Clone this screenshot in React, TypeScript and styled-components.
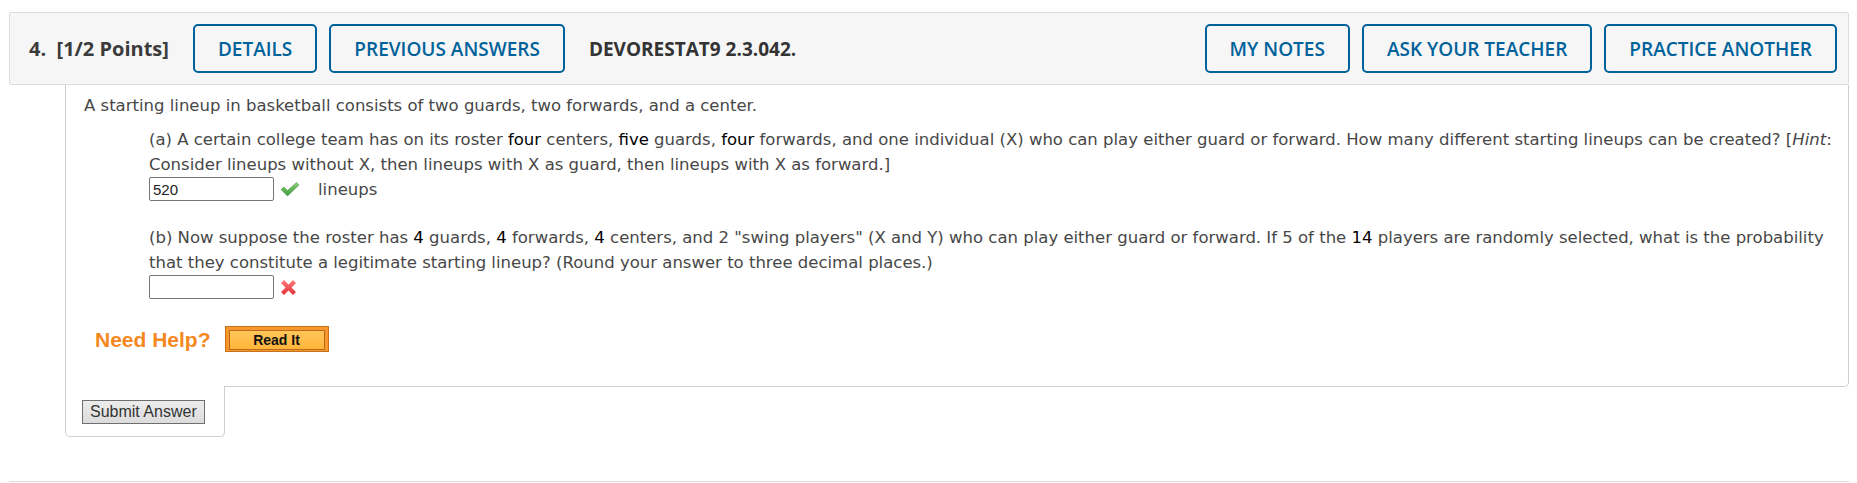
import React from "react";
import styled, { createGlobalStyle } from "styled-components";

//-----------------------STYLE-----------------------//

const GlobalStyle = createGlobalStyle`
  html, body {
    margin: 0;
    padding: 0;
    background: #fff;
  }
  body {
    font-family: "DejaVu Sans", Verdana, sans-serif;
  }
`;

const PageStyle = styled.div`
  padding: 12px 8px 0 9px;
`;

const QuestionStyle = styled.div`
  display: flex;
  flex-direction: column;
`;

const HeaderStyle = styled.div`
  display: flex;
  justify-content: space-between;
  align-items: center;
  height: 71px;
  padding: 0 11px 0 19px;
  background: #f6f6f6;
  border: 1px solid #dcdcdc;
  border-radius: 2px;
  font-family: "Open Sans", sans-serif;
`;

const HeaderGroup = styled.div`
  display: flex;
  align-items: center;
  gap: 12px;
`;

const QuestionNumber = styled.span`
  font-size: 20px;
  font-weight: 700;
  color: #3b3b3b;
  margin-right: 12px;
  white-space: pre;
`;

const QuestionCode = styled.span`
  font-size: 19px;
  font-weight: 700;
  color: #333;
  margin-left: 12px;
`;

const OutlineButton = styled.button`
  height: 49px;
  padding: 0 23px;
  border: 2px solid #00629b;
  border-radius: 5px;
  background: #f6f6f6;
  color: #00629b;
  font-family: "Open Sans", sans-serif;
  font-size: 19px;
  font-weight: 600;
  cursor: pointer;
`;

const BodyStyle = styled.div`
  margin-left: 56px;
  padding: 8px 6px 34px 18px;
  border: 1px solid #cfcfcf;
  border-top: none;
  border-radius: 0 0 5px 0;
  color: #474747;
  font-size: 16.5px;
  line-height: 25px;
`;

const Intro = styled.div``;

const PartStyle = styled.div<{ $top: number }>`
  margin: ${(p) => p.$top}px 0 0 65px;
  b {
    font-weight: normal;
    color: #000;
  }
`;

const AnswerRow = styled.div`
  display: flex;
  align-items: center;
  height: 24px;
  gap: 6px;
`;

const AnswerInput = styled.input`
  box-sizing: border-box;
  width: 125px;
  height: 24px;
  padding: 1px 3px;
  border: 1px solid #777;
  border-radius: 2px;
  font-family: "Liberation Sans", Arial, sans-serif;
  font-size: 15px;
  color: #222;
`;

const Unit = styled.span`
  margin-left: 12px;
`;

const HelpRow = styled.div`
  display: flex;
  align-items: center;
  gap: 14px;
  margin: 27px 0 0 11px;
`;

const NeedHelp = styled.span`
  font-family: "Liberation Sans", Arial, sans-serif;
  font-size: 21px;
  font-weight: 700;
  color: #f5891f;
`;

const ReadItButton = styled.button`
  box-sizing: border-box;
  width: 104px;
  height: 26px;
  padding: 3px;
  border: 1px solid #c4731c;
  background: #f7962a;
  cursor: pointer;
  span {
    display: flex;
    align-items: center;
    justify-content: center;
    height: 100%;
    border: 1px solid #b8691a;
    background: linear-gradient(#ffc65a, #ffb43a);
    font-family: "Liberation Sans", Arial, sans-serif;
    font-size: 14px;
    font-weight: 700;
    color: #111;
  }
`;

const SubmitTab = styled.div`
  align-self: flex-start;
  margin: -1px 0 0 56px;
  width: 142px;
  padding: 14px 0 12px 16px;
  background: #fff;
  border: 1px solid #cfcfcf;
  border-top: none;
  border-radius: 0 0 5px 5px;
`;

const SubmitButton = styled.button`
  display: block;
  box-sizing: border-box;
  height: 24px;
  padding: 0 7px;
  border: 1px solid #6f6f6f;
  background: linear-gradient(#ececec, #dcdcdc);
  font-family: "Liberation Sans", Arial, sans-serif;
  font-size: 16px;
  color: #333;
  cursor: pointer;
`;

const FooterLine = styled.div`
  margin-top: 44px;
  border-top: 1px solid #e0e0e0;
`;

//-----------------------ICONS-----------------------//

const CheckMark = () => (
  <svg width="20" height="16" viewBox="0 0 20 16">
    <defs>
      <linearGradient id="chk" x1="0" y1="0" x2="0" y2="1">
        <stop offset="0" stopColor="#8fd07d" />
        <stop offset="1" stopColor="#3f9a3a" />
      </linearGradient>
    </defs>
    <path
      d="M1 8.5 L4 6 L7.5 9.5 L16.5 1.5 L19 4 L7.5 15 Z"
      fill="url(#chk)"
      stroke="#4a9b43"
      strokeWidth="0.6"
    />
  </svg>
);

const CrossMark = () => (
  <svg width="17" height="17" viewBox="0 0 17 17">
    <defs>
      <linearGradient id="crs" x1="0" y1="0" x2="0" y2="1">
        <stop offset="0" stopColor="#ff7a7a" />
        <stop offset="1" stopColor="#e2333a" />
      </linearGradient>
    </defs>
    <path
      d="M1 4 L4 1 L8.5 5.5 L13 1 L16 4 L11.5 8.5 L16 13 L13 16 L8.5 11.5 L4 16 L1 13 L5.5 8.5 Z"
      fill="url(#crs)"
    />
  </svg>
);

//-----------------------COMPONENT-----------------------//

const App = () => {
  return (
    <PageStyle>
      <GlobalStyle />
      <QuestionStyle>
        <HeaderStyle>
          <HeaderGroup>
            <QuestionNumber>4.  [1/2 Points]</QuestionNumber>
            <OutlineButton>DETAILS</OutlineButton>
            <OutlineButton>PREVIOUS ANSWERS</OutlineButton>
            <QuestionCode>DEVORESTAT9 2.3.042.</QuestionCode>
          </HeaderGroup>
          <HeaderGroup>
            <OutlineButton>MY NOTES</OutlineButton>
            <OutlineButton>ASK YOUR TEACHER</OutlineButton>
            <OutlineButton>PRACTICE ANOTHER</OutlineButton>
          </HeaderGroup>
        </HeaderStyle>

        <BodyStyle>
          <Intro>
            A starting lineup in basketball consists of two guards, two
            forwards, and a center.
          </Intro>
          <PartStyle $top={9}>
            (a) A certain college team has on its roster <b>four</b> centers,{" "}
            <b>five</b> guards, <b>four</b> forwards, and one individual (X)
            who can play either guard or forward. How many different starting
            lineups can be created? [<i>Hint</i>: Consider lineups without X,
            then lineups with X as guard, then lineups with X as forward.]
            <AnswerRow>
              <AnswerInput defaultValue="520" />
              <CheckMark />
              <Unit>lineups</Unit>
            </AnswerRow>
          </PartStyle>
          <PartStyle $top={24}>
            (b) Now suppose the roster has <b>4</b> guards, <b>4</b> forwards,{" "}
            <b>4</b> centers, and 2 "swing players" (X and Y) who can play
            either guard or forward. If 5 of the <b>14</b> players are randomly
            selected, what is the probability that they constitute a legitimate
            starting lineup? (Round your answer to three decimal places.)
            <AnswerRow>
              <AnswerInput />
              <CrossMark />
            </AnswerRow>
          </PartStyle>
          <HelpRow>
            <NeedHelp>Need Help?</NeedHelp>
            <ReadItButton>
              <span>Read It</span>
            </ReadItButton>
          </HelpRow>
        </BodyStyle>

        <SubmitTab>
          <SubmitButton>Submit Answer</SubmitButton>
        </SubmitTab>
      </QuestionStyle>
      <FooterLine />
    </PageStyle>
  );
};

export default App;
